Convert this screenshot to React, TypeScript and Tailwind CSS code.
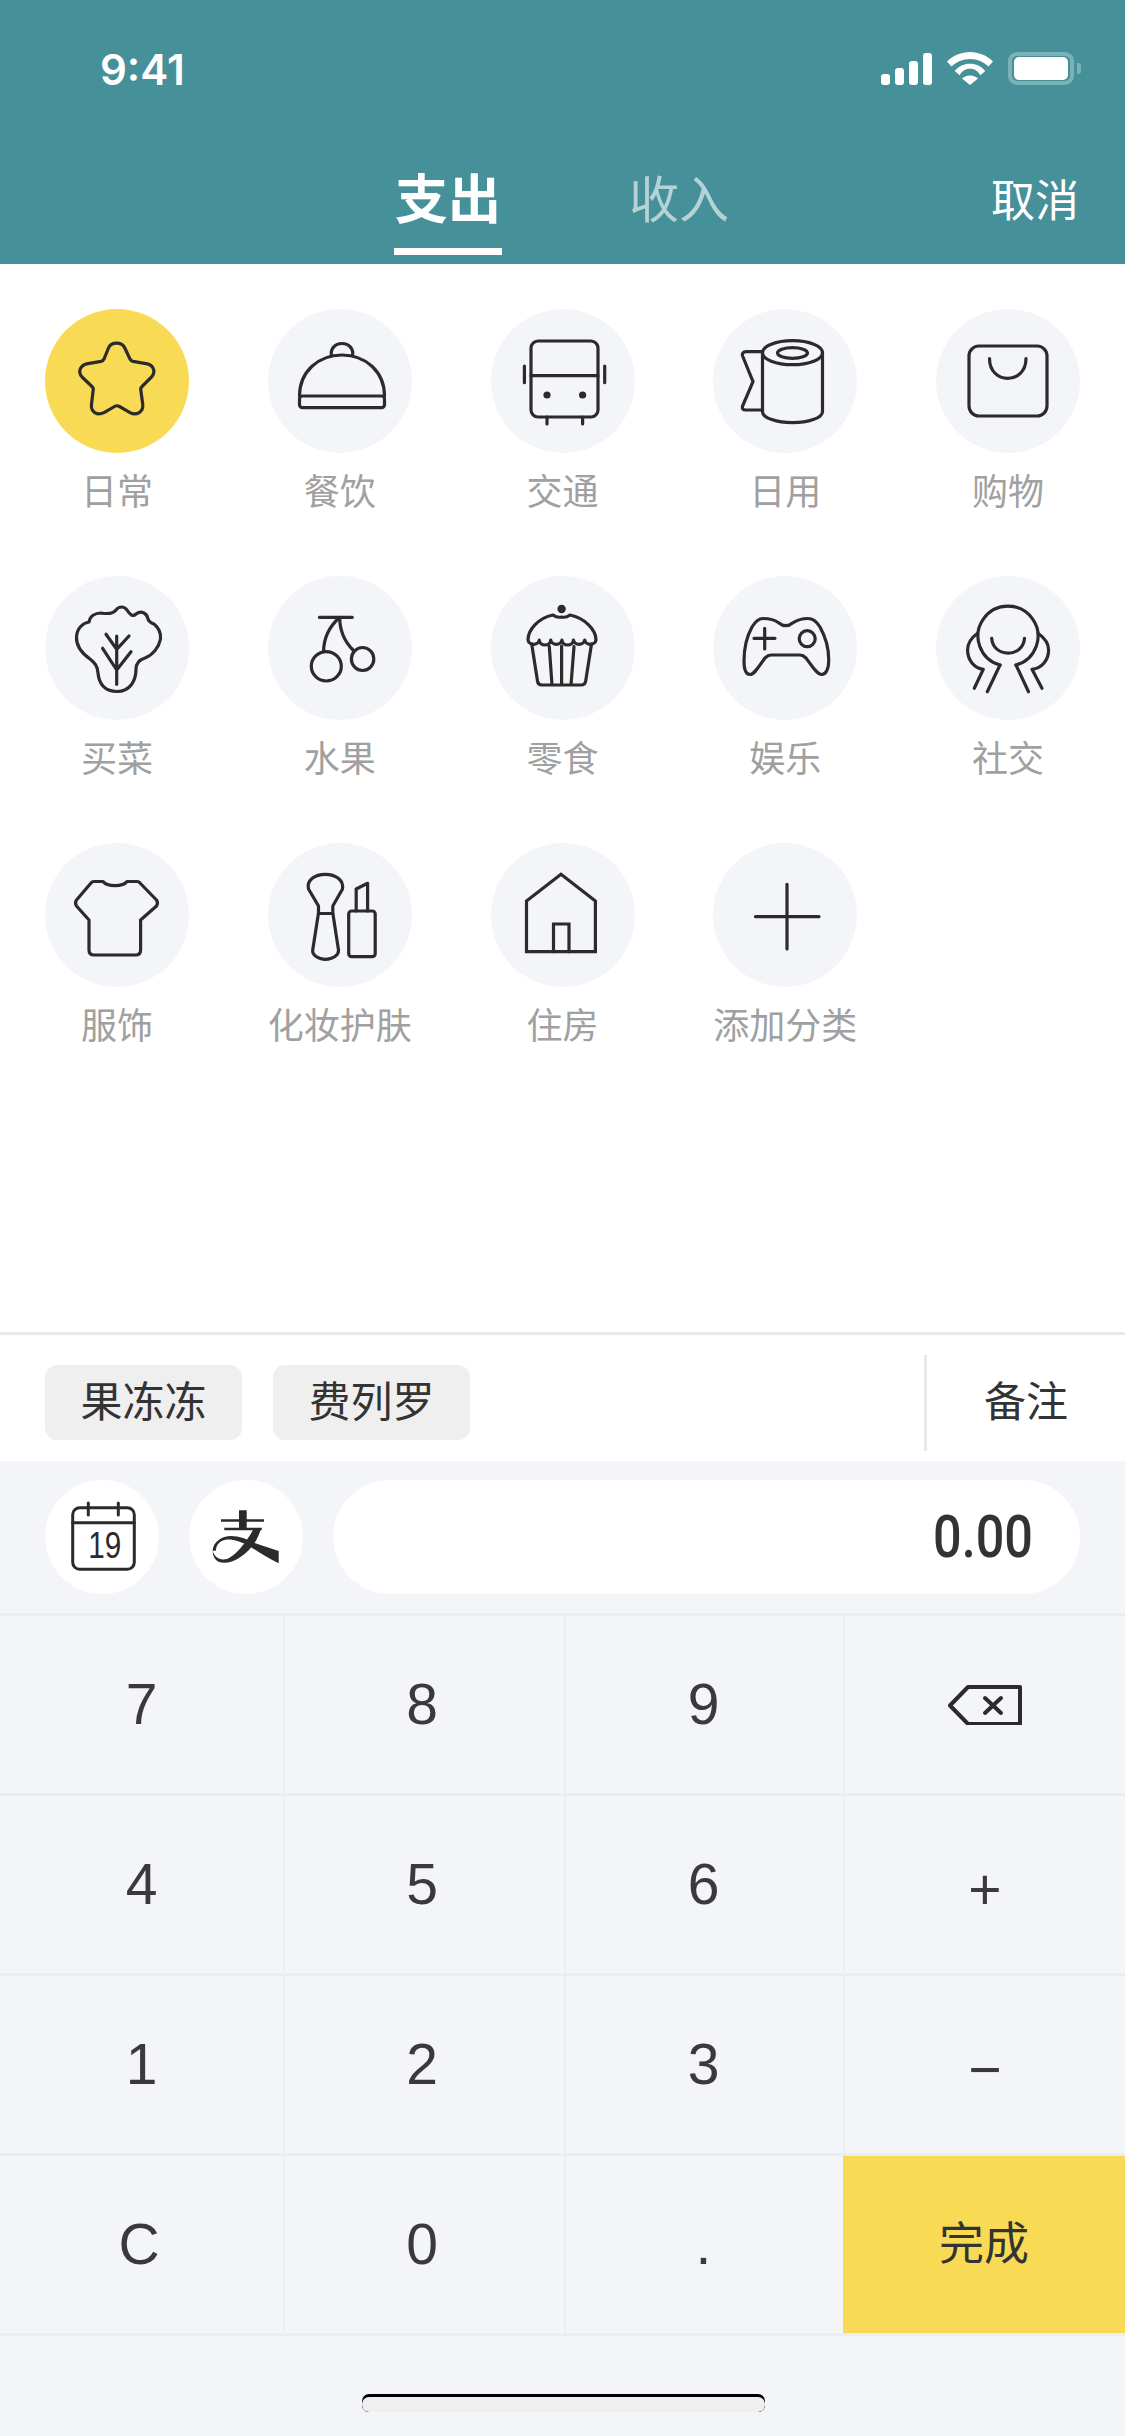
import React from 'react';

const font = '"Liberation Sans", "Noto Sans CJK SC", sans-serif';

const icons: Record<string, React.ReactNode> = {
  star: (
    <path d="M63.5 39C66 32.5 77 32.5 79.8 39L85 50Q86 52 88 52.4L101 54.7C109 56 111 63 106.5 68L97 77.5Q95.5 79 95.8 81L97.7 95C98.7 103 91.5 107 85 103.6L74.5 97.5Q72 96 69.5 97.5L59 103.6C52 107 45.5 103 46.5 95L48.2 81Q48.5 79 47 77.5L37 68C32.5 63 35 56 43 54.7L56 52.4Q58 52 59 50Z" />
  ),
  dish: (
    <>
      <path d="M31.5 87C31.5 63 50 46 74 46C98 46 116.5 63 116.5 87" />
      <rect x="31.5" y="87" width="85" height="11.7" rx="3" />
      <path d="M63.5 47C62 40 67 34.5 74 34.5C81 34.5 86 40 84.5 47" />
    </>
  ),
  bus: (
    <>
      <rect x="40" y="32" width="67" height="76" rx="7" />
      <path d="M40 66.7H107M33.4 57V73.7M113.7 57V73.7M56 108V115M91.6 108V115" />
      <circle cx="56" cy="86" r="3.6" fill="#2b2b2b" stroke="none" />
      <circle cx="91.6" cy="86" r="3.6" fill="#2b2b2b" stroke="none" />
    </>
  ),
  roll: (
    <>
      <ellipse cx="79.5" cy="43.7" rx="30" ry="12" />
      <ellipse cx="79.5" cy="44" rx="15" ry="5.3" />
      <path d="M49.5 43.7V102.7C49.5 109 64 113.7 79.5 113.7C95 113.7 109.5 109 109.5 102.7V43.7" />
      <path d="M49.5 42.7H33.3C30 42.7 28.8 44.5 29.6 47L40 72.7L29.6 97C28.8 99.5 30 101 32.5 101H49.5" />
    </>
  ),
  bag: (
    <>
      <rect x="33" y="37" width="78" height="70" rx="10" />
      <path d="M53.5 49.5C53.5 76 90 76 90 49.5" />
    </>
  ),
  lettuce: (
    <>
      <path d="M72 115.5C60 115.5 54 108 53 97C52.5 90 50 87 45 83C38 78 31 70 31.5 61C32 52 38 47 44 46C45 40 50 37 56 37C62 38 68 38 71 34C74 30 79 30 82 34C85 39 88 41 91 38C96 34 102 37 103 43C104 46 106 47 109 48C114 52 116 57 115.5 63C114 71 108 79 100 82C94 84 91 87 91 93C91 105 85 115.5 72 115.5Z" />
      <path d="M71.7 60V108.3M61 58.3L71.7 73.3L84 60M57.6 72.3L71.7 94L86 75.7" />
    </>
  ),
  cherry: (
    <>
      <path d="M51.4 41.3H84.3M71.7 41.3C62 50 55.6 62 55.6 75.7M71.7 41.3C71.7 54 77 66 85 74" />
      <ellipse cx="58.3" cy="90.3" rx="15" ry="14.7" />
      <ellipse cx="94.6" cy="83" rx="11.2" ry="11.5" />
    </>
  ),
  cupcake: (
    <>
      <circle cx="70.6" cy="33" r="2.6" fill="#2b2b2b" />
      <path d="M62 39Q66 42 70.6 41Q75 42 79 39C94 42 105 54 105 64A5.7 5 0 0 1 93.7 64A5.7 5 0 0 1 82.4 64A5.7 5 0 0 1 71 64A5.7 5 0 0 1 59.7 64A5.7 5 0 0 1 48.3 64A5.7 5 0 0 1 37 64C37 54 47 42 62 39Z" />
      <path d="M40.7 68L46.5 105Q47 109 51 109H90Q94 109 94.7 105L100.5 68M58.3 70.7L61 109M70.6 70V109M83 70.7L80 109" />
    </>
  ),
  gamepad: (
    <>
      <path d="M50 42.5C56 42.5 62 44 66 47C70 50.5 75.5 50.5 79.5 47C84 44 90 42.5 95 42.5C100 42.5 104 46 107 51C112 60 116 72 115.7 85C115.7 93 113 98.5 108.5 98.5C104 98.5 99 90 93 82C91 80 89.5 79 87 79H58C55.5 79 54 80 52 82C46 90 41.5 98.5 37 98.5C32.5 98.5 31 93 31 85C31 72 34 60 39 51C42 46 45 42.5 50 42.5Z" />
      <path d="M41 62.3H62M51.7 52.3V73" />
      <circle cx="94.2" cy="62.7" r="8" />
    </>
  ),
  friend: (
    <>
      <path d="M64 89A30 30 0 1 1 80 89" />
      <path d="M64 89L51.3 115.7M80 89L92.5 115.7" />
      <path d="M41.6 57.3C35 62 31.6 68 31.6 74C31.6 84 38 92 47.3 93.3L38.3 112.3" />
      <path d="M102 57.3C108.6 62 112.6 68 112.6 74C112.6 84 106 92 96 93.3L106 112.3" />
      <path d="M55.7 62.3C57 82 87 82 88.5 62.3" />
    </>
  ),
  shirt: (
    <path d="M49 38.5H58C62 44 78 44 82 38.5H92Q94 38.5 95 40L111.5 57Q113.5 60 111.5 63L95.6 77V107Q95.6 112 90.6 112H49Q44 112 44 107V77L31.500 63Q29.500 60 31.500 57L46 40Q47 38.5 49 38.5Z" />
  ),
  makeup: (
    <>
      <path d="M50.5 63L40.5 46C38.5 37 47 31.3 57.3 31.3C67.5 31.3 76 37 74.5 46L64.8 63V70L70.5 107C71 112 65 116.3 57.5 116.3C50 116.3 44 112 44.7 107L50.5 70Z" />
      <path d="M50.5 70.5H64.8" />
      <rect x="80.7" y="68" width="26.5" height="45.7" rx="3" />
      <path d="M88.2 68V46L99.6 40.3V68" />
    </>
  ),
  house: (
    <>
      <path d="M70 31.3L104.4 58V108.7H35.5V58Z" strokeLinejoin="miter" />
      <path d="M62.5 108.7V81H78V108.7" strokeLinejoin="miter" />
    </>
  ),
  plus: <path d="M74 41.3V106M42.500 73.7H106" />,
};

type Category = { label: string; icon: string; active?: boolean };

const categories: Category[] = [
  { label: '日常', icon: 'star', active: true },
  { label: '餐饮', icon: 'dish' },
  { label: '交通', icon: 'bus' },
  { label: '日用', icon: 'roll' },
  { label: '购物', icon: 'bag' },
  { label: '买菜', icon: 'lettuce' },
  { label: '水果', icon: 'cherry' },
  { label: '零食', icon: 'cupcake' },
  { label: '娱乐', icon: 'gamepad' },
  { label: '社交', icon: 'friend' },
  { label: '服饰', icon: 'shirt' },
  { label: '化妆护肤', icon: 'makeup' },
  { label: '住房', icon: 'house' },
  { label: '添加分类', icon: 'plus' },
];

const keys = ['7', '8', '9', 'del', '4', '5', '6', '+', '1', '2', '3', '−', 'C', '0', '.', '完成'];

const StatusBar = () => (
  <div className="flex h-[150px] items-start justify-between pl-[100px] pr-[44px] pt-[52px]">
    <span className="font-['Inter'] text-[42px] font-semibold leading-[36px] text-white">9:41</span>
    <div className="flex items-start gap-[15px]">
      <div className="flex items-end gap-[5px] pt-[1px]">
        <div className="h-[11px] w-[9px] rounded-[3px] bg-white" />
        <div className="h-[17px] w-[9px] rounded-[3px] bg-white" />
        <div className="h-[24px] w-[9px] rounded-[3px] bg-white" />
        <div className="h-[32px] w-[9px] rounded-[3px] bg-white" />
      </div>
      <svg width="46" height="33" viewBox="0 0 46 33" fill="white">
        <path d="M23 0C14.500 0 6 3.500 0 9.500L4.500 14.500C9 10 16 7 23 7C30 7 37 10 41.500 14.500L46 9.500C40 3.500 31.500 0 23 0Z" />
        <path d="M23 11.700C17 11.700 12 14 7.700 19L12.700 23.300C15 18.500 19 16.700 23 16.700C27 16.700 31 18.500 33.300 23.300L38.300 19C34 14 29 11.700 23 11.700Z" />
        <path d="M23 23.500C20 23.500 17.500 24.500 15 26.500L23 33L31 26.500C28.500 24.500 26 23.500 23 23.500Z" />
      </svg>
      <div className="flex items-center gap-[3px]">
        <div className="flex h-[33px] w-[66px] items-center justify-center rounded-[9px] border-[4px] border-white/30">
          <div className="h-[23px] w-[54px] rounded-[5px] bg-white" />
        </div>
        <div className="h-[11px] w-[4px] rounded-r-[3px] bg-white/30" />
      </div>
    </div>
  </div>
);

const Header = () => (
  <div className="h-[264px] bg-[#46909a]">
    <StatusBar />
    <div className="relative h-[114px]">
      <div className="flex pl-[394px]">
        <div className="flex h-[105px] w-[108px] flex-col items-center border-b-[7px] border-white pt-[20px]">
          <span className="whitespace-nowrap text-[53px] font-bold leading-[62px] text-white">支出</span>
        </div>
        <span className="ml-[127px] pt-[20px] text-[50px] leading-[62px] text-white/60">收入</span>
      </div>
      <span className="absolute right-[46px] top-[27px] text-[44px] leading-[50px] text-white">取消</span>
    </div>
  </div>
);

const CategoryGrid = () => (
  <div className="grid h-[1068px] grid-cols-[repeat(5,144px)] content-start justify-between gap-y-[60px] px-[45px] pt-[45px]">
    {categories.map((c) => (
      <div key={c.label} className="flex w-[144px] flex-col items-center">
        <div className={`h-[144px] w-[144px] rounded-full ${c.active ? 'bg-[#f9da55]' : 'bg-[#f3f5f9]'}`}>
          <svg width="144" height="144" viewBox="0 0 144 144" fill="none" stroke="#2b2b2b" strokeWidth="3.2" strokeLinecap="round" strokeLinejoin="round">
            {icons[c.icon]}
          </svg>
        </div>
        <span className="mt-[15px] h-[48px] whitespace-nowrap text-[36px] leading-[50px] text-[#a0a0a0]">{c.label}</span>
      </div>
    ))}
  </div>
);

const NoteBar = () => (
  <div className="flex h-[129px] items-center border-t-[3px] border-[#e8e8e8] bg-white pl-[45px] pt-[9px]">
    <div className="flex h-[75px] w-[197px] items-center justify-center rounded-[12px] bg-[#efefef] text-[42px] text-[#333333]">果冻冻</div>
    <div className="ml-[31px] flex h-[75px] w-[197px] items-center justify-center rounded-[12px] bg-[#efefef] text-[42px] text-[#333333]">费列罗</div>
    <div className="ml-auto flex h-[96px] w-[201px] items-center justify-center border-l-[3px] border-[#e8e8e8] text-[42px] text-[#333333]">备注</div>
  </div>
);

const AmountBar = () => (
  <div className="flex h-[152px] items-center gap-[30px] bg-[#f3f5f9] px-[45px]">
    <div className="h-[114px] w-[114px] shrink-0 rounded-full bg-white">
      <svg width="114" height="114" viewBox="0 0 114 114" fill="none" stroke="#2b2b2b" strokeWidth="3" strokeLinecap="round" strokeLinejoin="round">
        <rect x="27.700" y="27.700" width="61.600" height="61.600" rx="7" />
        <path d="M27.700 42.700H89.300M43.300 23V35M73.300 23V35" />
        <text x="59.700" y="77.700" textAnchor="middle" fontSize="36" fill="#2b2b2b" stroke="none" fontFamily="Liberation Sans" textLength="33" lengthAdjust="spacingAndGlyphs">19</text>
      </svg>
    </div>
    <div className="h-[114px] w-[114px] shrink-0 rounded-full bg-white">
      <svg width="114" height="114" viewBox="0 0 114 114" fill="#2b2b2b">
        <path d="M50 30.300H57.700V39.300H75V41.800H57.700V47.700H72.700V50.200H35.300V47.700H50V41.800H32V39.300H50Z" />
        <path d="M23.700 71C23.700 62 33 56 42 56C50 56 58 59 67 63.500L89.700 71V83.300C78 78 70 72 60 66C52 61.500 44 59 38 59.500C31 60 27 65 27 70.500Z" />
        <path d="M64.300 49.500H71.700C68 62 60 72 50 78C44 82 36 84 30 82C25.500 80 23.700 75 23.700 71C25 76 29 79 34 79.500C43 80 55 66 64.300 49.500Z" />
      </svg>
    </div>
    <div className="flex h-[114px] flex-1 items-center justify-end rounded-full bg-white pr-[47px]">
      <span className="origin-right scale-x-[0.84] font-['Roboto'] text-[60px] font-medium text-[#333333]">0.00</span>
    </div>
  </div>
);

const Keypad = () => (
  <div className="grid grid-cols-[285px_281px_279px_280px] grid-rows-[repeat(4,180px)] border-b-[3px] border-[#ebedf0] bg-[#f3f5f9]">
    {keys.map((k, i) => {
      const done = k === '完成';
      const op = k === '+' || k === '−';
      return (
        <div
          key={k}
          className={`flex items-center justify-center border-t-[3px] border-[#ebedf0] ${i % 4 !== 3 ? 'border-r-[2px]' : ''} ${done ? '-ml-[2px] border-t-0 bg-[#f9da55]' : ''} ${k === 'C' ? 'pr-[5px]' : ''} ${op ? 'pt-[9px]' : ''} ${i % 4 === 1 ? 'pr-[5px]' : ''} ${i % 4 === 2 ? 'pr-[2px]' : ''}`}
        >
          {k === 'del' ? (
            <svg width="74" height="40" viewBox="0 0 74 40" fill="none" stroke="#2b2b2b" strokeWidth="4" strokeLinejoin="round" strokeLinecap="round">
              <path d="M20 2H72V39H20L2 20.500Z" />
              <path d="M37 13L53 28M53 13L37 28" />
            </svg>
          ) : (
            <span className={`leading-none ${done ? 'text-[45px] text-[#333333]' : 'text-[57px] text-[#3a3a3a]'}`}>{k}</span>
          )}
        </div>
      );
    })}
  </div>
);

const HomeBar = () => (
  <div className="flex h-[100px] justify-center bg-[#f3f5f9] pl-[2px] pt-[58px]">
    <div className="h-[18px] w-[403px] overflow-hidden rounded-[7px] bg-black pt-[3px]">
      <div className="h-[15px] rounded-[7px] bg-[#efefef]" />
    </div>
  </div>
);

export default function App() {
  return (
    <div className="h-[2436px] w-[1125px] overflow-hidden bg-white" style={{ fontFamily: font }}>
      <Header />
      <CategoryGrid />
      <NoteBar />
      <AmountBar />
      <Keypad />
      <HomeBar />
    </div>
  );
}
